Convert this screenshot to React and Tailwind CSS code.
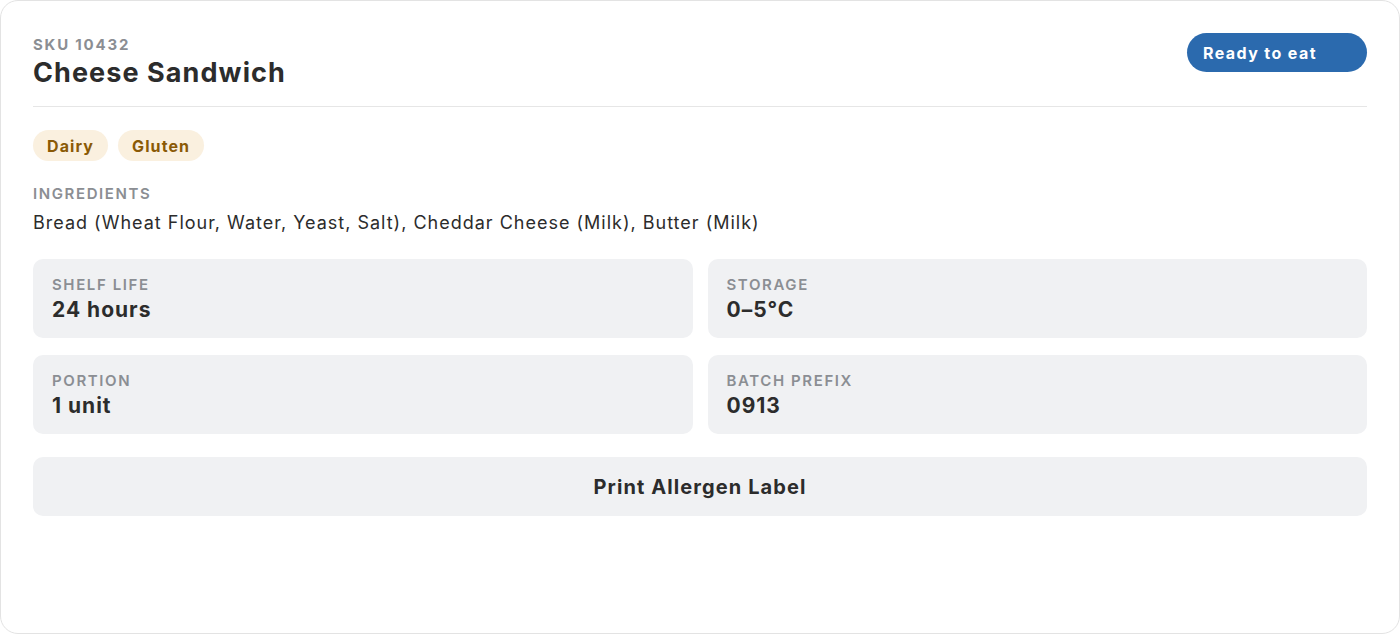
const ff = { fontFamily: '"Inter", "Noto Sans", sans-serif' };

const facts = [
  { label: 'Shelf life', value: '24 hours' },
  { label: 'Storage', value: '0–5°C' },
  { label: 'Portion', value: '1 unit' },
  { label: 'Batch prefix', value: '0913' },
];

export default function App() {
  return (
    <div className="h-[634px] w-[1400px] bg-white" style={ff}>
      <div className="h-full rounded-[18px] border border-[#e3e3e3] bg-white px-8 pt-[34px]">
        {/* Header */}
        <div className="flex items-start justify-between border-b border-[#e6e6e6] pb-[15px]">
          <div>
            <div className="text-[15px] font-bold leading-[20px] tracking-[1.8px] text-[#8b8e93]">SKU 10432</div>
            <div className="text-[27px] font-bold leading-[36px] tracking-[0.04em] text-[#2c2c2c]">Cheese Sandwich</div>
          </div>
          <div className="-mt-[2px] flex h-[39px] w-[180px] items-center rounded-full bg-[#2b6aae] pl-4 text-[16px] font-bold tracking-[1.4px] text-white">
            Ready to eat
          </div>
        </div>

        {/* Allergens */}
        <div className="mt-[23px] flex gap-[10px]">
          {['Dairy', 'Gluten'].map((a) => (
            <span
              key={a}
              className="flex h-[31px] items-center rounded-full bg-[#faf0df] px-[14px] text-[16px] font-bold tracking-[1.1px] text-[#8a5a06]"
            >
              {a}
            </span>
          ))}
        </div>

        {/* Ingredients */}
        <div className="mt-[23px] text-[15px] font-semibold uppercase leading-[20px] tracking-[1.6px] text-[#8b8e93]">
          Ingredients
        </div>
        <div className="mt-[6px] text-[18px] leading-[26px] tracking-[1px] text-[#2c2c2c]">
          Bread (Wheat Flour, Water, Yeast, Salt), Cheddar Cheese (Milk), Butter (Milk)
        </div>

        {/* Facts */}
        <div className="mt-[23px] grid grid-cols-2 gap-x-[15px] gap-y-[17px]">
          {facts.map((f) => (
            <div key={f.label} className="h-[79px] rounded-[10px] bg-[#f0f1f3] px-[19px] pt-[17px]">
              <div className="text-[15px] font-semibold uppercase leading-[18px] tracking-[1.6px] text-[#8b8e93]">
                {f.label}
              </div>
              <div className="mt-[2px] text-[21px] font-bold leading-[28px] tracking-[1px] text-[#2c2c2c]">{f.value}</div>
            </div>
          ))}
        </div>

        <button className="mt-[23px] flex h-[59px] w-full items-center justify-center rounded-[10px] bg-[#f0f1f3] text-[20px] font-bold tracking-[1.1px] text-[#2c2c2c]">
          Print Allergen Label
        </button>
      </div>
    </div>
  );
}
